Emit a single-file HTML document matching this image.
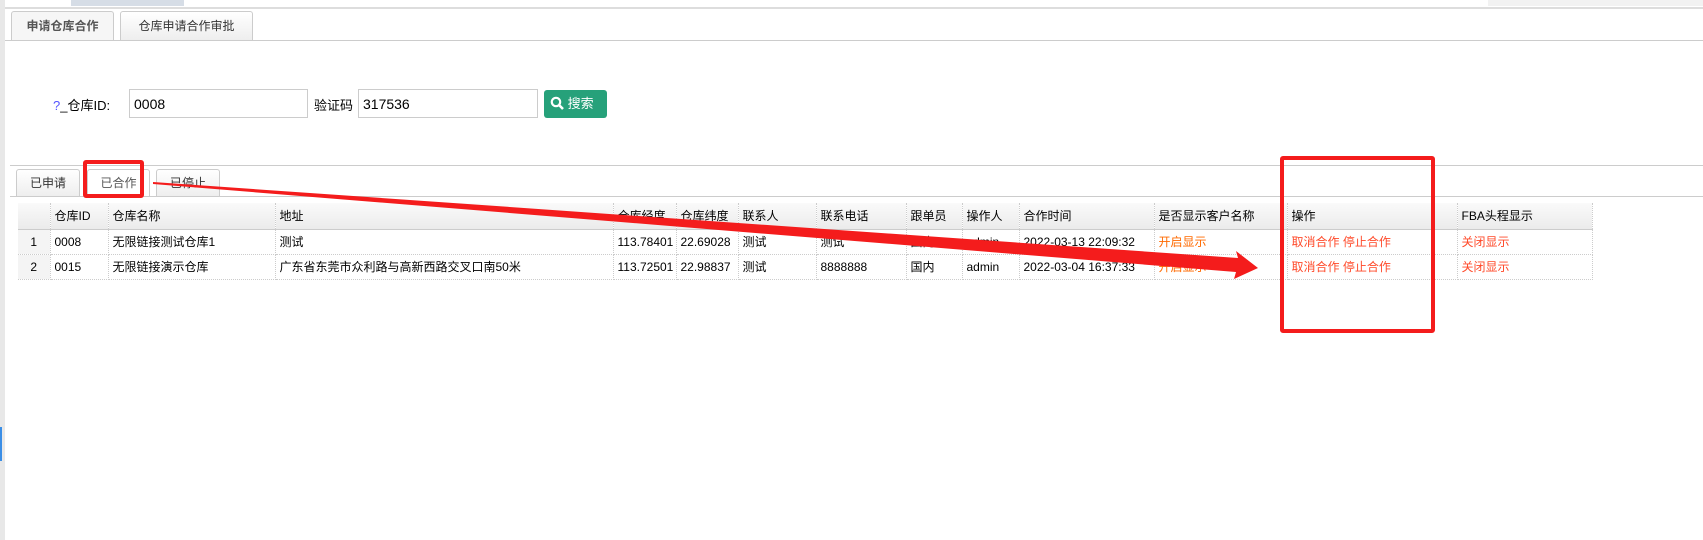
<!DOCTYPE html>
<html><head><meta charset="utf-8"><style>
*{margin:0;padding:0;box-sizing:border-box}
body{width:1703px;height:540px;position:relative;background:#fff;font-family:"Liberation Sans","Noto Sans CJK SC",sans-serif;font-size:12px;color:#000;overflow:hidden}
.a{position:absolute}
.tab{position:absolute;border:1px solid #ccc;border-bottom:none;border-radius:3px 3px 0 0;background:linear-gradient(#fff,#eee);text-align:center;color:#333}
input{position:absolute;border:1px solid #ccc;height:29px;font:14px "Liberation Sans",sans-serif;padding-left:4px;color:#000}
table{position:absolute;left:18px;top:203px;border-collapse:collapse;width:1574px;table-layout:fixed}
td{height:25px;border-right:1px dotted #ccc;border-bottom:1px dotted #ccc;padding-left:4px;white-space:nowrap;overflow:hidden;font-size:12px}
tr.h td{height:26px;background:linear-gradient(#fafafa,#ebebeb);border-bottom:1px solid #ccc}
td.n{background:#f4f4f4;text-align:center;padding:0}
.r{color:#ff4a2a}.o{color:#ff6a00}
</style></head><body>
<div class="a" style="left:0;top:0;width:5px;height:540px;background:#e8e8e8"></div>
<div class="a" style="left:0;top:427px;width:2px;height:34px;background:#3a8ee6"></div>
<div class="a" style="left:71px;top:0;width:113px;height:6px;background:#d6dde6"></div>
<div class="a" style="left:1488px;top:0;width:215px;height:6px;background:#f2f2f2"></div>
<div class="a" style="left:5px;top:7px;width:1698px;height:2px;background:#ddd"></div>
<div class="tab" style="left:11px;top:11px;width:103px;height:30px;line-height:28px;background:#f6f6f6;font-weight:bold;color:#555">申请仓库合作</div>
<div class="tab" style="left:120px;top:11px;width:133px;height:29px;line-height:28px">仓库申请合作审批</div>
<div class="a" style="left:5px;top:40px;width:1698px;height:1px;background:#ccc"></div>
<div class="a" style="left:53px;top:95px;font-size:13px"><span style="color:#55f">?</span>_仓库ID:</div>
<input style="left:129px;top:89px;width:179px" value="0008">
<div class="a" style="left:314px;top:95px;font-size:13px">验证码</div>
<input style="left:358px;top:89px;width:180px" value="317536">
<div class="a" style="left:544px;top:90px;width:63px;height:28px;background:#26a17a;border-radius:3px;color:#fff;font-size:13px;line-height:28px;padding-left:6px"><svg width="14" height="14" viewBox="0 0 14 14" style="vertical-align:-2px"><circle cx="6" cy="6" r="4.2" fill="none" stroke="#fff" stroke-width="2.2"/><path d="M9 9l4 4" stroke="#fff" stroke-width="2.6"/></svg> 搜索</div>
<div class="a" style="left:10px;top:165px;width:1693px;height:1px;background:#ccc"></div>
<div class="tab" style="left:16px;top:169px;width:64px;height:27px;line-height:26px">已申请</div>
<div class="tab" style="left:87px;top:169px;width:63px;height:27px;line-height:26px;background:#fff;color:#555">已合作</div>
<div class="tab" style="left:156px;top:169px;width:64px;height:27px;line-height:26px">已停止</div>
<div class="a" style="left:10px;top:196px;width:1693px;height:1px;background:#ccc"></div>
<table>
<colgroup><col style="width:32px"><col style="width:58px"><col style="width:167px"><col style="width:338px"><col style="width:63px"><col style="width:62px"><col style="width:78px"><col style="width:90px"><col style="width:56px"><col style="width:57px"><col style="width:135px"><col style="width:133px"><col style="width:170px"><col style="width:135px"></colgroup>
<tr class="h"><td></td><td>仓库ID</td><td>仓库名称</td><td>地址</td><td>仓库经度</td><td>仓库纬度</td><td>联系人</td><td>联系电话</td><td>跟单员</td><td>操作人</td><td>合作时间</td><td>是否显示客户名称</td><td>操作</td><td>FBA头程显示</td></tr>
<tr><td class="n">1</td><td>0008</td><td>无限链接测试仓库1</td><td>测试</td><td>113.78401</td><td>22.69028</td><td>测试</td><td>测试</td><td>国内</td><td>admin</td><td>2022-03-13 22:09:32</td><td class="o">开启显示</td><td class="r">取消合作 停止合作</td><td class="r">关闭显示</td></tr>
<tr><td class="n">2</td><td>0015</td><td>无限链接演示仓库</td><td>广东省东莞市众利路与高新西路交叉口南50米</td><td>113.72501</td><td>22.98837</td><td>测试</td><td>8888888</td><td>国内</td><td>admin</td><td>2022-03-04 16:37:33</td><td class="o">开启显示</td><td class="r">取消合作 停止合作</td><td class="r">关闭显示</td></tr>
</table>
<div class="a" style="left:83px;top:160px;width:61px;height:38px;border:4px solid #f41c1c;border-radius:3px"></div>
<div class="a" style="left:1280px;top:156px;width:155px;height:177px;border:4px solid #f41c1c;border-radius:3px"></div>
<svg class="a" style="left:0;top:0" width="1703" height="540"><polygon points="153,182 1238,258 1236,251 1258,268 1234,279 1236,272 153,184" fill="#f41c1c"/></svg>
</body></html>
